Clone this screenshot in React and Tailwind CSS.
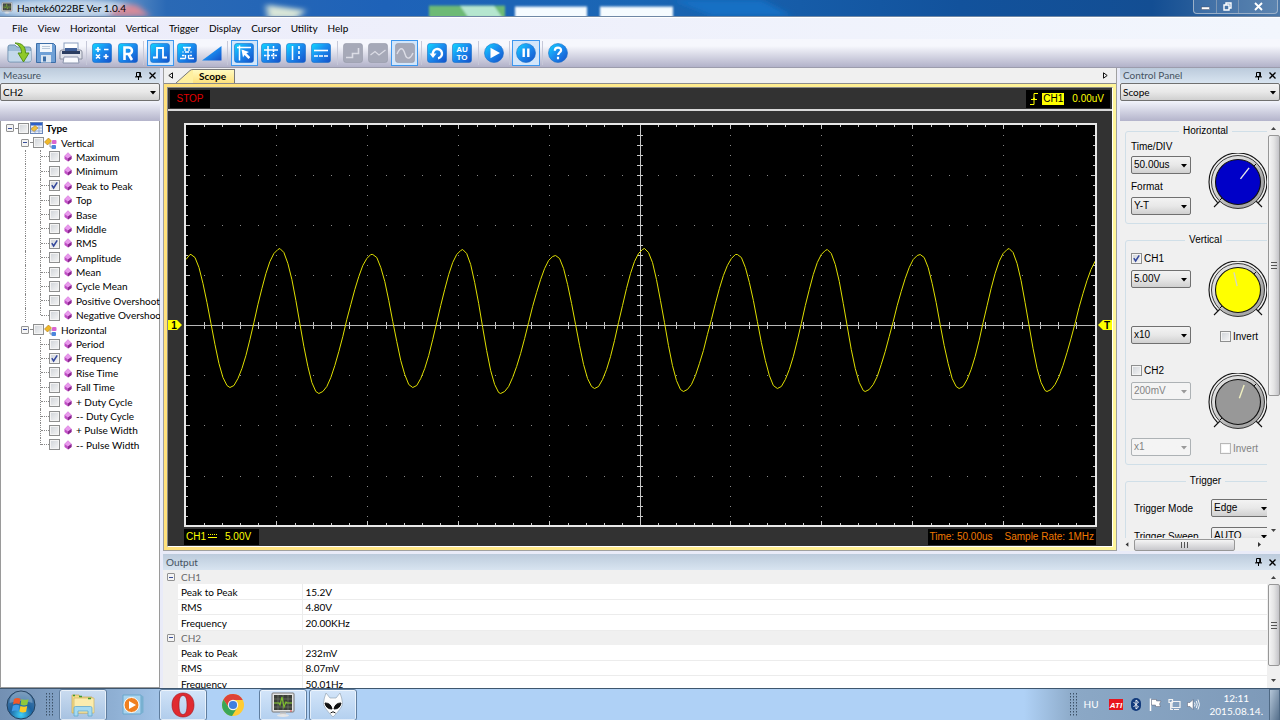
import React from "react";

const UI = "font-[Lato,'Open_Sans',sans-serif]";
const ARIAL = "font-['Liberation_Sans',Arial,sans-serif]";

/* ---------- small shared pieces ---------- */

function Check({ id, label, checked, disabled }) {
  return (
    <span className="relative flex size-[11px] shrink-0">
      <input
        id={id}
        type="checkbox"
        aria-label={label}
        defaultChecked={checked}
        disabled={disabled}
        className="peer size-[11px] appearance-none border border-[#8e8f8f] bg-gradient-to-br from-[#cfd3d8] to-[#f6f6f6] shadow-[inset_0_0_0_1px_#f4f4f4] disabled:border-[#b8b8b8] disabled:from-white disabled:to-white"
      />
      <svg viewBox="0 0 11 11" className="pointer-events-none absolute inset-0 hidden size-[11px] peer-checked:block">
        <path d="M2.8 5.2 4.6 8 8.2 2.4" fill="none" stroke="#33479c" strokeWidth="1.5" />
      </svg>
    </span>
  );
}

function Select({ label, value, disabled, className = "", font = ARIAL }) {
  return (
    <span className={`relative flex h-[18px] ${className}`}>
      <select
        aria-label={label}
        defaultValue={value}
        disabled={disabled}
        className={`w-full appearance-none rounded-[2px] border border-[#707070] bg-gradient-to-b from-[#f3f3f3] via-[#e8e8e8] to-[#d0d0d0] pl-[2px] text-[10px] leading-4 text-black disabled:border-[#adb2b5] disabled:from-[#f4f4f4] disabled:via-[#f4f4f4] disabled:to-[#f4f4f4] disabled:text-[#838383] ${font}`}
      >
        <option>{value}</option>
      </select>
      <svg viewBox="0 0 6 4" className={`pointer-events-none absolute right-1 top-2 h-1 w-1.5 ${disabled ? "fill-[#9a9a9a]" : "fill-black"}`}>
        <path d="M0 0h6L3 3.6z" />
      </svg>
    </span>
  );
}

function PanelHeader({ title, height = "h-[15px]" }) {
  return (
    <header className={`flex shrink-0 items-center gap-1 bg-gradient-to-b from-[#bccbdc] to-[#d8e4f0] pl-[3px] pr-[3px] text-[10px] text-[#45525f] ${height} ${UI}`}>
      <h2 className="flex-1">{title}</h2>
      <button type="button" aria-label="Pin panel" className="flex size-[10px] items-center justify-center">
        <svg viewBox="0 0 7 8" className="h-2 w-[7px]"><path d="M1.5 .5h4v4h-4zM0 4.9h7M3.5 5v3M4.7 .5v4" fill="none" stroke="#000" /></svg>
      </button>
      <button type="button" aria-label="Close panel" className="flex size-[10px] items-center justify-center">
        <svg viewBox="0 0 7 7" className="size-[7px]"><path d="M.5.5l6 6M6.5.5l-6 6" stroke="#000" strokeWidth="1.3" /></svg>
      </button>
    </header>
  );
}

function VScroll({ thumb }) {
  return (
    <div aria-hidden="true" className="flex w-[13px] shrink-0 flex-col items-center bg-[#f0f0f0]">
      <svg viewBox="0 0 13 14" className="h-3.5 w-[13px]"><path d="M4 9h5L6.500 6z" fill="#444" /></svg>
      <div className={`flex w-3 items-center justify-center rounded-[2px] border border-[#979797] bg-gradient-to-r from-[#f5f5f5] via-[#e4e4e4] to-[#c4c4c8] ${thumb}`}>
        <svg viewBox="0 0 6 7" className="h-[7px] w-1.5"><path d="M0 .5h6M0 3.5h6M0 6.500h6" stroke="#555" /></svg>
      </div>
      <span className="flex-1" />
      <svg viewBox="0 0 13 14" className="h-3.5 w-[13px]"><path d="M4 5h5L6.500 8z" fill="#444" /></svg>
    </div>
  );
}

/* ---------- title bar, menu and toolbar ---------- */

function MonitorIcon({ className }) {
  return (
    <svg viewBox="0 0 24 26" className={className}>
      <rect x="1" y="1" width="22" height="19" rx="1" fill="#e4e4e4" stroke="#777" />
      <rect x="3" y="3" width="18" height="15" fill="#3b3f38" />
      <path d="M3 7h18M3 11h18M3 15h18M7 3v15M12 3v15M17 3v15" stroke="#7a8074" strokeWidth=".6" />
      <path d="M3 11h5l1 2 2-8 2 10 2-5 1 1h5" fill="none" stroke="#7fc42a" strokeWidth="1.1" />
      <path d="M9 20.500h6V23h-6z" fill="#c8c8c8" /><ellipse cx="12" cy="23.500" rx="6" ry="1.500" fill="#e6e6e6" />
      <circle cx="20" cy="19" r=".8" fill="#e03030" />
    </svg>
  );
}

function TitleBar() {
  return (
    <header className="relative flex h-[17px] shrink-0 items-start overflow-hidden border-b border-[#6f87a5] bg-[#1b5aa8]">
      <svg aria-hidden="true" viewBox="0 0 1280 17" preserveAspectRatio="none" className="absolute inset-0 size-full">
        <defs>
          <filter id="soft" x="-20%" y="-60%" width="140%" height="220%"><feGaussianBlur stdDeviation="3" /></filter>
          <filter id="soft1" x="-20%" y="-60%" width="140%" height="220%"><feGaussianBlur stdDeviation="1.300" /></filter>
          <linearGradient id="sky">
            <stop offset="0" stopColor="#6f9ccc" /><stop offset=".1" stopColor="#5b8cc4" /><stop offset=".13" stopColor="#2a69b5" /><stop offset=".3" stopColor="#1e62b8" />
            <stop offset=".5" stopColor="#1a66b4" /><stop offset=".75" stopColor="#12529c" /><stop offset=".9" stopColor="#134e93" /><stop offset="1" stopColor="#4c78a8" />
          </linearGradient>
        </defs>
        <rect width="1280" height="17" fill="url(#sky)" />
        <g filter="url(#soft)">
          <ellipse cx="64" cy="9" rx="72" ry="10" fill="#c3d6ea" />
          <path d="M108 17Q120 1 138 6L150 17z" fill="#d58a9a" />
          <path d="M266 5l40 6-10 9h-28z" fill="#d9e6d8" />
          <path d="M672 0h90l30 17h-80z" fill="#1270c4" />
        </g>
        <g filter="url(#soft1)">
          <rect x="429" y="6" width="76" height="14" fill="#6dba74" />
          <path d="M460 6h34l8 12h-34z" fill="#b5e6cf" />
          <rect x="515" y="7" width="72" height="14" fill="#f5fbff" />
          <rect x="600" y="7" width="73" height="14" fill="#f5fbff" />
        </g>
      </svg>
      <MonitorIcon className="relative ml-[1px] mt-[2px] size-3" />
      <h1 className={`relative ml-1 flex-1 text-[10px] leading-[17px] text-black ${UI}`}>Hantek6022BE Ver 1.0.4</h1>
      <div className="relative mr-[2px] flex h-3.5 rounded-b-[4px] border border-t-0 border-[#9bb0c8] bg-white/10">
        <button type="button" aria-label="Minimize" className="flex w-[23px] items-center justify-center border-r border-[#7d97b5]">
          <svg viewBox="0 0 9 9" className="size-[9px]"><rect x=".5" y="5" width="8" height="2.500" fill="#fff" stroke="#445" strokeWidth=".4" /></svg>
        </button>
        <button type="button" aria-label="Restore" className="flex w-[22px] items-center justify-center border-r border-[#7d97b5]">
          <svg viewBox="0 0 9 9" className="size-[9px]"><path d="M3 2.500V1h5v5H6.500M1 3h5v5H1z" fill="none" stroke="#fff" strokeWidth="1.400" /></svg>
        </button>
        <button type="button" aria-label="Close" className="flex w-[38px] items-center justify-center">
          <svg viewBox="0 0 9 9" className="size-[9px]"><path d="M1 1l7 7M8 1L1 8" stroke="#fff" strokeWidth="1.900" /></svg>
        </button>
      </div>
    </header>
  );
}

const MENUS = ["File", "View", "Horizontal", "Vertical", "Trigger", "Display", "Cursor", "Utility", "Help"];

function MenuBar() {
  return (
    <nav className={`flex h-[22px] shrink-0 items-center gap-2.5 border-t border-white bg-gradient-to-r from-[#ececfa] to-[#f2f6fd] pl-3 text-[10px] text-black ${UI}`}>
      {MENUS.map((m) => <button key={m} type="button">{m}</button>)}
    </nav>
  );
}

function Tile({ gray, round, children }) {
  return (
    <svg viewBox="0 0 20 20" className="size-5">
      <defs>
        <linearGradient id="tileBlue" x1="0" y1="0" x2="1" y2="1"><stop offset="0" stopColor="#10d8ff" /><stop offset=".45" stopColor="#1a8ef0" /><stop offset="1" stopColor="#1550c8" /></linearGradient>
      </defs>
      <rect x=".5" y=".5" width="19" height="19" rx={round ? 9.5 : 2.5} fill={gray ? "#a6a9b8" : "url(#tileBlue)"} stroke={gray ? "#9699a8" : "#1a6fc8"} strokeWidth=".6" />
      <g fill="none" stroke={gray ? "#dcdde6" : "#fff"} strokeWidth="1.600">{children}</g>
    </svg>
  );
}

const TOOLS = [
  [
    ["Open", false, <svg viewBox="0 0 26 22" className="h-[22px] w-[26px]">
      <path d="M1 5q0-2 2-2h5l2 2h12q2 0 2 2v11q0 2-2 2H3q-2 0-2-2z" fill="#9cbbd6" stroke="#6c8fae" /><path d="M1.500 9h22.500v9q0 1.500-2 1.500H3q-1.500 0-1.500-1.500z" fill="#c3d8ea" />
      <path d="M8 1c7 0 10.500 3 10.500 10H22l-5.500 9L11 11h3.500C14.500 6 12.500 3.500 8 1z" fill="#8fc926" stroke="#4d8a12" strokeWidth=".9" /></svg>],
    ["Save", false, <svg viewBox="0 0 20 20" className="size-5">
      <path d="M.5.5h17l2 2v17H.5z" fill="#6fa0d6" stroke="#3c6ea8" /><rect x="4" y="1" width="12" height="8" fill="#f2f7fc" /><path d="M6 3.500h8M6 5.500h8" stroke="#b8c8da" />
      <rect x="5" y="12" width="10" height="7.500" fill="#d9e4f0" /><rect x="7" y="13.500" width="3" height="5" fill="#3c6ea8" /></svg>],
    ["Print", false, <svg viewBox="0 0 24 22" className="h-[22px] w-6">
      <rect x="5" y="1" width="14" height="10" fill="#fff" stroke="#8ba0c0" /><path d="M1 10q0-2 2-2h18q2 0 2 2v7H1z" fill="#dfe2ea" stroke="#8a90a0" />
      <path d="M3 9h18v3H3z" fill="#2b3d60" /><path d="M5 15h14l1 6H4z" fill="#fafbff" stroke="#8a94ac" /><path d="M6 6h12v3H6z" fill="#3f5f98" /></svg>],
  ],
  [
    ["Math", false, <Tile><path d="M3.500 6.500h5M6 4v5M12 6.500h4.500M4 11.500l4 4M8 11.500l-4 4M11.500 13.500h5M14 11v5" /></Tile>],
    ["Reference", false, <Tile><path d="M6.500 17V4.500h4.200a3 3 0 0 1 0 6.500H7M10.500 11l3.500 6" strokeWidth="2.600" /></Tile>],
  ],
  [
    ["Single waveform", true, <Tile><path d="M3 14.500h4V5h6v9.500h4" strokeWidth="1.800" /></Tile>],
    ["Persistence", false, <Tile><path d="M6 4.500h8M3 15.500h5.500M11.500 15.500H17M8 9h4M5.500 9h1M13.500 9h1M5 12.500h2.500M12.500 12.500H15" strokeWidth="1.300" /><path d="M8 4.500V8M12 4.500V8M8.500 12v3.500M11.500 12v3.500" strokeWidth="1.300" /></Tile>],
    ["Intensity", false, <svg viewBox="0 0 20 20" className="size-5"><path d="M0 17.500 19.500 3v14.500z" fill="url(#tileBlue)" /></svg>],
  ],
  [
    ["Cursor select", true, <Tile><path d="M3 4.500h14M5.500 2.500v15M8.500 7.500l7 7" strokeWidth="1.500" /><path d="M7.500 6.500 15 9l-3 1.500 4 4-1.500 1.500-4-4L9 14.500z" fill="#fff" stroke="none" /></Tile>],
    ["Cross cursor", false, <Tile><path d="M7 3v14M3 7h14" strokeWidth="1.500" /><path d="M12.500 3v14M3 12.500h14" strokeWidth="1.500" strokeDasharray="2.500 1" /></Tile>],
    ["Vertical cursor", false, <Tile><path d="M6.500 3v14" /><path d="M13 3v14" strokeDasharray="3 2" /></Tile>],
    ["Horizontal cursor", false, <Tile><path d="M3 7.500h14" /><path d="M3 13h14" strokeDasharray="4 1" /></Tile>],
  ],
  [
    ["Step interpolation", false, <Tile gray><path d="M3 14.500h6.500v-4H15.500V5" /></Tile>],
    ["Linear interpolation", false, <Tile gray><path d="M2.500 12 7 8.500l4 3.500 6.500-5" strokeWidth="1.200" /></Tile>],
    ["Sine interpolation", true, <Tile gray><path d="M2 11c3-7 6-7 8 0s6 4 8-1" strokeWidth="1.400" /></Tile>],
  ],
  [
    ["Undo", false, <Tile><path d="M6 12a4.600 4.600 0 1 1 5 3.200" strokeWidth="2.400" /><path d="M2.500 10.500h7L6 15z" fill="#fff" stroke="none" /></Tile>],
    ["Auto set", false, <Tile><g className={`${ARIAL} text-[8px] font-bold`} fill="#fff" stroke="none" textAnchor="middle"><text x="10" y="9">AU</text><text x="10" y="17">TO</text></g></Tile>],
  ],
  [["Start", false, <Tile round><path d="M6.500 4.800 16 10l-9.500 5.200z" fill="#fff" stroke="none" /></Tile>]],
  [["Pause", true, <Tile round><path d="M7.700 5.500v8.500M12.300 5.500v8.500" strokeWidth="2.400" /></Tile>]],
  [["About", false, <Tile round><path d="M6.800 7.800c0-4.300 6.600-4 6.300-.4-.2 2-3 2.300-3 4.600M10 13.800v2.400" strokeWidth="2.200" /></Tile>]],
];

function ToolBar() {
  return (
    <div role="toolbar" className="flex h-[29px] shrink-0 border-b border-[#9c9cac] bg-gradient-to-b from-[#f6f7fd] from-25% to-[#b2b2c9] pl-[7px]">
      <div className="flex w-[564px] items-center">
        {TOOLS.map((group, g) => (
          <React.Fragment key={g}>
            {g > 0 && <span className="flex w-1.5 justify-center"><span className="h-6 w-px bg-[#c6c8d8]" /></span>}
            {group.map(([name, on, icon]) => (
              <button key={name} type="button" aria-label={name} aria-pressed={on}
                className={`flex h-[26px] flex-1 items-center justify-center ${on ? "border border-[#3c97ef] bg-[#d3e6fa]" : ""}`}>
                {icon}
              </button>
            ))}
          </React.Fragment>
        ))}
      </div>
    </div>
  );
}

/* ---------- measure panel ---------- */

const VERTICAL = ["Maximum", "Minimum", "Peak to Peak", "Top", "Base", "Middle", "RMS", "Amplitude", "Mean", "Cycle Mean", "Positive Overshoot", "Negative Overshoot"];
const HORIZONTAL = ["Period", "Frequency", "Rise Time", "Fall Time", "+ Duty Cycle", "-- Duty Cycle", "+ Pulse Width", "-- Pulse Width"];
const ON = ["Peak to Peak", "RMS", "Frequency"];

function Expander() {
  return (
    <button type="button" aria-label="Collapse" className="flex size-2 shrink-0 items-center justify-center rounded-[1px] border border-[#929292] bg-[#f4f4f4]">
      <span className="h-px w-1 bg-[#3a4f9a]" />
    </button>
  );
}

const DASH = <span className="mx-px flex-1 border-t border-dotted border-[#888]" />;

function Leaf({ name, last, inner }) {
  return (
    <li className="flex flex-1 items-center">
      <span className={`ml-6 w-[15px] shrink-0 self-stretch ${inner ? "border-l border-dotted border-[#888]" : ""}`} />
      <span className={`shrink-0 self-start border-l border-dotted border-[#888] ${last ? "h-1/2" : "h-full"}`} />
      <span className="w-2 shrink-0 border-t border-dotted border-[#888]" />
      <label className="flex items-center whitespace-nowrap">
        <Check checked={ON.includes(name)} />
        <svg viewBox="0 0 8 10" className="ml-1 mr-1 h-[10px] w-2"><path d="M4 .5 7.500 4v3L4 9.500.5 7V4z" fill="#c04fc4" /><path d="M4 .5 7.500 4 4 6.500.5 4z" fill="#e89aec" /><path d="M4 6.500 7.500 4v3L4 9.500z" fill="#8a2a90" /></svg>
        {name}
      </label>
    </li>
  );
}

function Branch({ name, items, inner }) {
  return (
    <>
      <li className="flex flex-1 items-center">
        <span className="ml-5 flex w-3 items-center"><Expander />{DASH}</span>
        <label className="flex items-center">
          <Check />
          <svg viewBox="0 0 13 12" className="mr-1 h-3 w-[13px]"><path d="M.5 5 4.500 1 7.500 4 3.500 8z" fill="#f0b828" stroke="#b07a10" strokeWidth=".6" /><path d="M6 6h3M6 6v4h2" fill="none" stroke="#777" strokeWidth=".7" /><rect x="8" y="3" width="4.500" height="4" rx="1" fill="#d965d0" /><rect x="7.500" y="8" width="4.500" height="4" rx="1" fill="#4c86dc" /></svg>
          {name}
        </label>
      </li>
      {items.map((n, i) => <Leaf key={n} name={n} inner={inner} last={i === items.length - 1} />)}
    </>
  );
}

function MeasurePanel() {
  return (
    <aside className="flex w-40 shrink-0 flex-col overflow-hidden">
      <PanelHeader title="Measure" />
      <Select label="Measured channel" value="CH2" font={UI} />
      <div className="h-5 shrink-0 bg-gradient-to-b from-[#f2f4fc] to-[#b4b4cb]" />
      <div className="flex-1 border border-t-0 border-[#9a9a9a] bg-white">
        <ul className={`flex h-[331px] flex-col text-[10px] leading-3 text-black ${UI}`}>
          <li className="flex flex-1 items-center">
            <span className="ml-[5px] flex w-3 items-center"><Expander />{DASH}</span>
            <label className="flex items-center font-bold">
              <Check />
              <svg viewBox="0 0 13 12" className="mx-px mr-[3px] h-3 w-[13px]"><rect x=".5" y=".5" width="12" height="11" fill="#e8eef8" stroke="#6a86b8" /><rect x="1" y="1" width="11" height="2.500" fill="#2c5fc8" /><path d="M1 6h11M1 9h11M5 3v8M9 3v8" stroke="#7c9ad0" strokeWidth=".7" /><path d="M1 7 5 3.500 8 6 4 9.500z" fill="#f0c040" stroke="#a87a10" strokeWidth=".5" /></svg>
              Type
            </label>
          </li>
          <Branch name="Vertical" items={VERTICAL} inner />
          <Branch name="Horizontal" items={HORIZONTAL} />
        </ul>
      </div>
    </aside>
  );
}

/* ---------- oscilloscope display ---------- */

const EXTREMA = [
  [182, 262], [191, 254], [230, 387], [280, 248], [319, 393], [373, 254], [413, 387], [463, 249], [501, 393], [556, 255], [595, 388],
  [645, 248], [684, 391], [738, 254], [778, 388], [828, 249], [866, 391], [921, 254], [960, 388], [1010, 248], [1048, 391], [1104, 254],
];

function trace() {
  const pts = [];
  for (let i = 0; i < EXTREMA.length - 1; i++) {
    const [x0, y0] = EXTREMA[i];
    const [x1, y1] = EXTREMA[i + 1];
    for (let x = x0; x < x1; x += 4) {
      const t = (1 - Math.cos((Math.PI * (x - x0)) / (x1 - x0))) / 2;
      pts.push(`${x},${Math.round(y0 + (y1 - y0) * t)}.5`);
    }
  }
  return pts.join(" ");
}

function Plot() {
  const cols = [];
  const dots = [];
  for (let i = 1; i < 50; i++) cols.push(Math.round(185.4 + i * 18.2));
  const rows = [];
  for (let i = 1; i < 40; i++) rows.push(Math.round(124.5 + i * 10.03));
  for (let d = 1; d < 10; d++) if (d !== 5) rows.forEach((y) => dots.push([Math.round(185.4 + d * 91), y]));
  for (let d = 1; d < 8; d++) if (d !== 4) cols.forEach((x) => dots.push([x, Math.round(124.5 + d * 50.15)]));
  return (
    <svg role="img" aria-label="CH1 waveform" viewBox="186 125 910 400" preserveAspectRatio="none" className="block size-full" shapeRendering="crispEdges">
      <rect x="186" y="125" width="910" height="400" fill="#000" />
      {dots.map(([x, y]) => <rect key={`${x}-${y}`} x={x} y={y} width="1" height="1" fill="#8a8a8a" />)}
      <g fill="#c8c8c8">
        {cols.map((x, i) => {
          const big = (i + 1) % 5 === 0 ? 2 : 0;
          return <React.Fragment key={x}><rect x={x} y="125" width="1" height={2 + big} /><rect x={x} y={523 - big} width="1" height={2 + big} /><rect x={x} y="322" width="1" height="7" /></React.Fragment>;
        })}
        {rows.map((y, i) => {
          const big = (i + 1) % 5 === 0 ? 2 : 0;
          return <React.Fragment key={y}><rect x="186" y={y} width={2 + big} height="1" /><rect x={1094 - big} y={y} width={2 + big} height="1" /><rect x="637" y={y} width="7" height="1" /></React.Fragment>;
        })}
        <rect x="186" y="325" width="910" height="1" fill="#b8b8b8" />
        <rect x="640" y="125" width="1" height="400" />
      </g>
      <polyline points={trace()} fill="none" stroke="#e0e000" strokeWidth="1" />
    </svg>
  );
}

function Marker({ text, flip }) {
  return (
    <svg viewBox="0 0 14 10" className="h-[10px] w-3.5">
      <path d={flip ? "M14 0H5L0 5l5 5h9z" : "M0 0h9l5 5-5 5H0z"} fill="#ff0" />
      <text x={flip ? 9 : 6} y="8.500" textAnchor="middle" className={`${ARIAL} text-[10px] font-bold`} fill="#000">{text}</text>
    </svg>
  );
}

function ScopeView() {
  return (
    <section className="flex min-w-0 flex-1 flex-col border border-[#a0a0a0] border-t-0 bg-[#f0f0f0]">
      <div className="flex h-4 shrink-0 items-end border-b border-[#8c8c8c]">
        <button type="button" aria-label="Previous tab" className="flex h-4 w-3 items-center justify-center">
          <svg viewBox="0 0 5 7" className="h-[7px] w-[5px]"><path d="M4.500.8v5.400L.8 3.500z" fill="none" stroke="#111" /></svg>
        </button>
        <button type="button" className="flex h-3.5 items-center">
          <svg viewBox="0 0 17 14" className="h-3.5 w-[17px]"><path d="M0 14 14 1.500Q15 .5 17 .5V14z" fill="#fff0a0" /><path d="M0 14 14 1.500Q15 .5 17 .5" fill="none" stroke="#777" /></svg>
          <span className={`flex h-3.5 items-center border-r border-t border-[#777] bg-gradient-to-b from-[#fffac0] to-[#ffe27c] pl-1.5 pr-2 text-[10px] font-bold text-black ${UI}`}>Scope</span>
        </button>
        <span className="flex-1" />
        <button type="button" aria-label="Next tab" className="flex h-4 w-[22px] items-center justify-center">
          <svg viewBox="0 0 5 7" className="h-[7px] w-[5px]"><path d="M.5.8v5.400L4.200 3.500z" fill="none" stroke="#111" /></svg>
        </button>
      </div>
      <div className="flex min-h-0 flex-1 bg-gradient-to-r from-[#ffe07c] to-[#fff59a] p-[3px]">
        <div className={`flex min-w-0 flex-1 flex-col border border-white border-l-[#888] border-t-[#888] bg-[#323232] text-[10px] ${ARIAL}`}>
          <div className="flex h-[21px] shrink-0 items-center justify-between px-[2px]">
            <span className="flex h-[18px] w-10 items-center justify-center bg-black text-[#e00000]">STOP</span>
            <span className="flex h-[18px] items-center bg-black pl-1 pr-1.5 text-[#ff0]">
              <svg viewBox="0 0 8 14" className="mr-1 h-3.5 w-2"><path d="M0 12.500h4v-11h4M1 7.500h6" fill="none" stroke="#ff0" /><path d="M2.200 8 4 5l1.800 3z" fill="#ff0" /></svg>
              <span className="mr-2 bg-[#ff0] px-px leading-3 text-black">CH1</span>0.00uV
            </span>
          </div>
          <div className="h-0.5 shrink-0 bg-[#d8d8d8]" />
          <div className="flex min-h-0 flex-1 pt-3">
            <div className="flex w-4 shrink-0 items-center"><Marker text="1" /></div>
            <div className="min-w-0 flex-1 border-2 border-[#e8e8e8]"><Plot /></div>
            <div className="flex w-[15px] shrink-0 items-center justify-end"><Marker text="T" flip /></div>
          </div>
          <div className="flex h-[19px] shrink-0 items-center justify-between px-4">
            <span className="flex h-4 items-center bg-black pl-[2px] pr-2 text-[#ff0]">
              CH1
              <svg viewBox="0 0 9 5" className="ml-[2px] mr-2 h-[5px] w-[9px]"><path d="M0 .5h9" stroke="#ff0" strokeDasharray="1 1" /><path d="M0 3.500h9" stroke="#ff0" /></svg>
              5.00V
            </span>
            <span className="flex h-4 items-center gap-3 bg-black px-0.5 text-[#f07800]"><span>Time: 50.00us</span><span>Sample Rate: 1MHz</span></span>
          </div>
        </div>
      </div>
    </section>
  );
}

/* ---------- control panel ---------- */

function Knob({ color, angle, pointer, id }) {
  return (
    <svg viewBox="0 0 60 60" className="block size-[60px] shrink-0">
      <defs><linearGradient id={id} x1="0" y1="0" x2="1" y2="1"><stop offset=".3" stopColor="#dedede" /><stop offset=".7" stopColor="#a8a8a8" /></linearGradient></defs>
      <path d="M9.500 49.500A29 29 0 1 1 50.500 49.500M6 54l9-9M54 54l-9-9" fill="none" stroke="#111" strokeWidth="1.100" />
      <circle cx="30" cy="29" r="26.500" fill={`url(#${id})`} stroke="#222" strokeWidth=".9" />
      <circle cx="30" cy="29" r="22.500" fill={color} stroke="#111" strokeWidth="1.100" />
      <path d="M14 45l-2 2M46 13l2-2" stroke="#111" />
      <path d="M30 25V11" transform={`rotate(${angle} 30 29)`} stroke={pointer} strokeWidth="1.400" />
    </svg>
  );
}

function Group({ title, children, className = "" }) {
  return (
    <fieldset className={`w-[156px] rounded-[3px] border border-[#d0dfe8] pl-[5px] ${className}`}>
      <legend className="mx-auto px-1 leading-3">{title}</legend>
      {children}
    </fieldset>
  );
}

function Channel({ name, on, scale, probe, knob }) {
  const id = name.toLowerCase();
  return (
    <div className="flex gap-[17px]">
      <div className="flex w-[60px] flex-col">
        <label className="flex h-3 items-center gap-0.5"><Check checked={on} />{name}</label>
        <Select label={`${name} volts per division`} value={scale} disabled={!on} className="mt-1.5" />
        <Select label={`${name} probe`} value={probe} disabled={!on} className="mt-[38px]" />
      </div>
      <div className="mt-[9px] flex flex-col gap-2">
        {knob}
        <label htmlFor={`${id}-invert`} className={`ml-3 flex h-3.5 items-center gap-0.5 ${on ? "" : "text-[#838383]"}`}>
          <Check id={`${id}-invert`} label={`Invert ${name}`} disabled={!on} />Invert
        </label>
      </div>
    </div>
  );
}

function ControlPanel() {
  return (
    <aside className="flex w-40 shrink-0 flex-col overflow-hidden bg-[#f0f0f0]">
      <PanelHeader title="Control Panel" />
      <Select label="Control page" value="Scope" font={UI} />
      <div className="h-5 shrink-0 bg-gradient-to-b from-[#f2f4fc] to-[#b4b4cb]" />
      <div className="flex min-h-0 flex-1">
        <div className="flex min-w-0 flex-1 flex-col">
          <div className={`flex min-h-0 flex-1 flex-col gap-2.5 overflow-hidden pl-[5px] pt-1 text-[10px] text-black ${ARIAL}`}>
            <Group title="Horizontal" className="pb-2">
              <div className="flex gap-[17px] pt-1">
                <div className="flex w-[60px] flex-col">
                  <span className="leading-3">Time/DIV</span>
                  <Select label="Time/DIV" value="50.00us" className="mt-[3px]" />
                  <span className="mt-[7px] leading-3">Format</span>
                  <Select label="Format" value="Y-T" className="mt-1" />
                </div>
                <div className="mt-3"><Knob id="k1" color="#0000c8" angle="38" pointer="#e8e8e8" /></div>
              </div>
            </Group>
            <Group title="Vertical" className="pb-2">
              <div className="flex flex-col gap-5 pt-1.5">
                <Channel name="CH1" on scale="5.00V" probe="x10" knob={<Knob id="k2" color="#ffff00" angle="-13" pointer="#d8d8c0" />} />
                <Channel name="CH2" scale="200mV" probe="x1" knob={<Knob id="k3" color="#989898" angle="20" pointer="#f0f0c0" />} />
              </div>
            </Group>
            <Group title="Trigger" className="shrink-0">
              <div className="flex flex-col gap-2.5 pl-[3px] pt-3">
                <div className="flex items-center"><span className="w-[77px]">Trigger Mode</span><Select label="Trigger Mode" value="Edge" className="w-[60px]" /></div>
                <div className="flex items-center"><span className="w-[77px]">Trigger Sweep</span><Select label="Trigger Sweep" value="AUTO" className="w-[60px]" /></div>
              </div>
            </Group>
          </div>
          <div aria-hidden="true" className="flex h-[13px] shrink-0 items-center bg-[#f0f0f0]">
            <svg viewBox="0 0 15 13" className="h-[13px] w-3.5"><path d="M9 4v5L6 6.500z" fill="#333" /></svg>
            <span className="flex h-3 w-[101px] items-center justify-center rounded-[2px] border border-[#979797] bg-gradient-to-b from-[#f5f5f5] to-[#c8c8cc]">
              <svg viewBox="0 0 7 6" className="h-1.5 w-[7px]"><path d="M.5 0v6M3.500 0v6M6.500 0v6" stroke="#555" /></svg>
            </span>
            <span className="flex-1" />
            <svg viewBox="0 0 15 13" className="h-[13px] w-[15px]"><path d="M6 4v5l3-2.500z" fill="#333" /></svg>
          </div>
        </div>
        <div className="flex pb-[13px]"><VScroll thumb="h-[261px]" /></div>
      </div>
    </aside>
  );
}

/* ---------- output panel ---------- */

const OUTPUT = [
  ["CH1", [["Peak to Peak", "15.2V"], ["RMS", "4.80V"], ["Frequency", "20.00KHz"]]],
  ["CH2", [["Peak to Peak", "232mV"], ["RMS", "8.07mV"], ["Frequency", "50.01Hz"]]],
];

function OutputPanel() {
  return (
    <section className="flex h-[134px] shrink-0 flex-col overflow-hidden">
      <PanelHeader title="Output" height="h-4" />
      <div className="flex min-h-0 flex-1 bg-white">
        <div className="min-w-0 flex-1 overflow-hidden">
          <table className={`h-[122px] w-full table-fixed border-collapse text-left text-[10px] leading-3 text-black ${UI}`}>
            <colgroup><col className="w-[15px]" /><col className="w-[124px]" /><col /></colgroup>
            {OUTPUT.map(([ch, rows]) => (
              <tbody key={ch}>
                <tr className="bg-[#f0f0f0] text-[#6a6a6a]">
                  <td className="p-0"><span className="flex justify-center"><Expander /></span></td>
                  <th colSpan={2} scope="rowgroup" className="p-0 pl-[3px] font-normal">{ch}</th>
                </tr>
                {rows.map(([k, v]) => (
                  <tr key={k}>
                    <td className="bg-[#f0f0f0] p-0" />
                    <th scope="row" className="border-b border-r border-[#ececec] p-0 pl-[3px] font-normal">{k}</th>
                    <td className="border-b border-[#ececec] p-0 pl-[3px]">{v}</td>
                  </tr>
                ))}
              </tbody>
            ))}
          </table>
        </div>
        <VScroll thumb="h-[82px]" />
      </div>
    </section>
  );
}

/* ---------- taskbar ---------- */

function Grip() {
  return (
    <svg aria-hidden="true" viewBox="0 0 8 24" className="h-6 w-2">
      <path d="M.5 0v24M3.500 0v24M6.500 0v24" stroke="#3d5268" strokeDasharray="1.500 1.500" />
    </svg>
  );
}

function TaskButton({ name, open, children }) {
  return (
    <button type="button" aria-label={name}
      className={`flex h-8 w-12 items-center justify-center rounded-[3px] ${open ? "border border-[#5f7d9e] bg-gradient-to-b from-[#dceafa]/80 to-[#b5cfec]/70 shadow-[inset_0_0_0_1px_rgba(255,255,255,.6)]" : ""}`}>
      {children}
    </button>
  );
}

function TaskBar() {
  return (
    <footer className="flex h-8 shrink-0 items-center border-t border-[#3e566e] bg-[linear-gradient(90deg,#7390b3_0%,#8fb0d4_9%,#afd1f6_15%,#afd1f6_80%,#8ba8c6_84%,#7d99b8_100%)]">
      <button type="button" aria-label="Start" className="ml-1.5 mr-2.5">
        <svg viewBox="0 0 30 30" className="size-[30px]">
          <defs><radialGradient id="orb" cx=".5" cy=".85" r=".8"><stop offset="0" stopColor="#3fd0f8" /><stop offset=".5" stopColor="#1c62a0" /><stop offset="1" stopColor="#4f7ba6" /></radialGradient></defs>
          <circle cx="15" cy="15" r="14" fill="url(#orb)" stroke="#23415f" />
          <path d="M3.500 13a11.500 11.500 0 0 1 23 0q-11-4-23 0z" fill="#fff" opacity=".25" />
          <path d="M8 9q3.500-2 6.500-.3l-1 5.600q-3-1.500-6.500.2z" fill="#f0592a" />
          <path d="M15.500 9q3.500 1.600 7 .2l-1.200 5.600q-3.500 1.500-6.800-.2z" fill="#8fc83c" />
          <path d="M6.800 15.700q3.500-1.600 6.500-.2l-1 5.500q-3.500-1.400-6.500.4z" fill="#3f9be8" />
          <path d="M14.400 16q3.500 1.600 6.800.1l-1.100 5.600q-3.500 1.500-6.700-.3z" fill="#fcc928" />
        </svg>
      </button>
      <Grip />
      <div className="ml-[5px] flex gap-0.5">
        <TaskButton name="Explorer" open>
          <svg viewBox="0 0 26 24" className="h-6 w-[26px]">
            <path d="M2 2h7l1 2h12v16H2z" fill="#f4dc88" stroke="#c8a850" strokeWidth=".7" /><path d="M4 5h20v15H4z" fill="#fbecae" stroke="#d0b460" strokeWidth=".7" />
            <path d="M3 2.500h2M9 3.500h3M18 5.500h3" stroke="#3f9a30" strokeWidth="1.500" />
            <path d="M4 23v-8q0-1.500 1.500-1.500h15q1.500 0 1.500 1.500v8h-4v-5H8v5z" fill="#a4daf2" stroke="#63a8cc" strokeWidth=".8" />
          </svg>
        </TaskButton>
        <TaskButton name="Media Player">
          <svg viewBox="0 0 24 22" className="h-[22px] w-6"><path d="M2 1h18v19H2z" fill="#a8d4ee" stroke="#6aa6cc" /><path d="M20 1l2.500 1.500v16L20 20z" fill="#78b0d0" /><circle cx="10.500" cy="11" r="7.500" fill="#f08020" stroke="#fff" /><path d="M8 7l7 4-7 4z" fill="#fff" /></svg>
        </TaskButton>
        <TaskButton name="Opera" open>
          <svg viewBox="0 0 24 26" className="h-[26px] w-6"><path d="M12 1C5 1 1 6 1 13s4 12 11 12 11-5 11-12S19 1 12 1zm0 2.500c3 0 4 4 4 9.500s-1 9.500-4 9.500S8 18.500 8 13s1-9.500 4-9.500z" fill="#e02a30" stroke="#a01018" strokeWidth=".6" fillRule="evenodd" /></svg>
        </TaskButton>
        <TaskButton name="Chrome">
          <svg viewBox="0 0 24 24" className="size-6"><circle cx="12" cy="12" r="11" fill="#fc3" /><path d="M12 7h9.800A11 11 0 0 0 2.500 6.500L7.700 14.500z" fill="#dd4338" /><path d="M2.500 6.500A11 11 0 0 0 11 23l5.300-8.500L12 17l-4.300-2.500z" fill="#3aa757" /><circle cx="12" cy="12" r="5.200" fill="#f4f4f4" /><circle cx="12" cy="12" r="4.100" fill="#3f7ee0" /></svg>
        </TaskButton>
        <TaskButton name="Hantek6022BE" open><MonitorIcon className="h-[26px] w-6" /></TaskButton>
        <TaskButton name="foobar2000" open>
          <svg viewBox="0 0 22 26" className="h-[26px] w-[22px]"><path d="M4 1 8 6h6l4-5q2 5 2.500 10Q21 15 11 25 1 15 1.500 11 2 6 4 1z" fill="#fdfdfd" stroke="#8a9aaa" strokeWidth=".6" /><path d="M3 11q6 0 7 6-6 0-7-6zM19 11q-6 0-7 6 6 0 7-6z" fill="#111" stroke="#111" /><path d="M8.500 21q2.500-2.500 5 0" fill="none" stroke="#111" /></svg>
        </TaskButton>
      </div>
      <span className="flex-1" />
      <Grip />
      <div className={`flex items-center text-[10px] text-white ${UI}`}>
        <span className="ml-1.5">HU</span>
        <svg viewBox="0 0 14 11" className="ml-2.5 h-[11px] w-3.5"><rect width="14" height="11" fill="#e8141c" /><text x="7" y="8.500" textAnchor="middle" className={`${ARIAL} text-[8px] font-bold italic`} fill="#fff">ATI</text></svg>
        <svg viewBox="0 0 10 13" className="ml-2 h-[13px] w-[10px]"><rect width="10" height="13" rx="5" fill="#123a7c" /><path d="M2.500 4 7.500 9 5 11V2l2.500 2-5 5" fill="none" stroke="#fff" strokeWidth=".9" /></svg>
        <svg viewBox="0 0 13 13" className="ml-2 h-[13px] w-[13px]"><path d="M1.500.5V13" stroke="#fff" strokeWidth="1.500" /><path d="M2.500 1.500h5v1.500H12L10.500 6l1 2.500h-5V7h-4z" fill="#fff" stroke="#445" strokeWidth=".4" /></svg>
        <svg viewBox="0 0 13 13" className="ml-1.5 h-[13px] w-[13px]"><path d="M4 3.500h8v6H4zM6 11.500h5M1 1.500h3.500v3H1zM2.700 5v6.500H5" fill="none" stroke="#f4f4f4" strokeWidth="1.200" /></svg>
        <svg viewBox="0 0 13 13" className="ml-1.5 h-[13px] w-[13px]"><path d="M.5 4.500h2.500L6 1.500v10L3 8.500H.5z" fill="#fff" stroke="#445" strokeWidth=".4" /><path d="M7.500 4.500q1 2 0 4M9.300 3q2 3.500 0 7M11 1.500q3 5 0 10" fill="none" stroke="#fff" strokeWidth=".9" /></svg>
        <time dateTime="2015-08-14T12:11" className="ml-2.5 mr-1.5 flex flex-col text-center leading-[13px]"><span>12:11</span><span>2015.08.14.</span></time>
      </div>
      <button type="button" aria-label="Show desktop" className="h-8 w-[11px] border border-[#4f6984] bg-gradient-to-br from-[#b4c6d8] to-[#56708c]" />
    </footer>
  );
}

export default function App() {
  return (
    <div className="flex h-screen flex-col overflow-hidden bg-[#e9ebf8]">
      <TitleBar />
      <MenuBar />
      <ToolBar />
      <main className="flex min-h-0 flex-1 gap-[3px]">
        <MeasurePanel />
        <div className="flex min-w-0 flex-1 flex-col gap-[3px]">
          <div className="flex min-h-0 flex-1 gap-[3px]">
            <ScopeView />
            <ControlPanel />
          </div>
          <OutputPanel />
        </div>
      </main>
      <TaskBar />
    </div>
  );
}
